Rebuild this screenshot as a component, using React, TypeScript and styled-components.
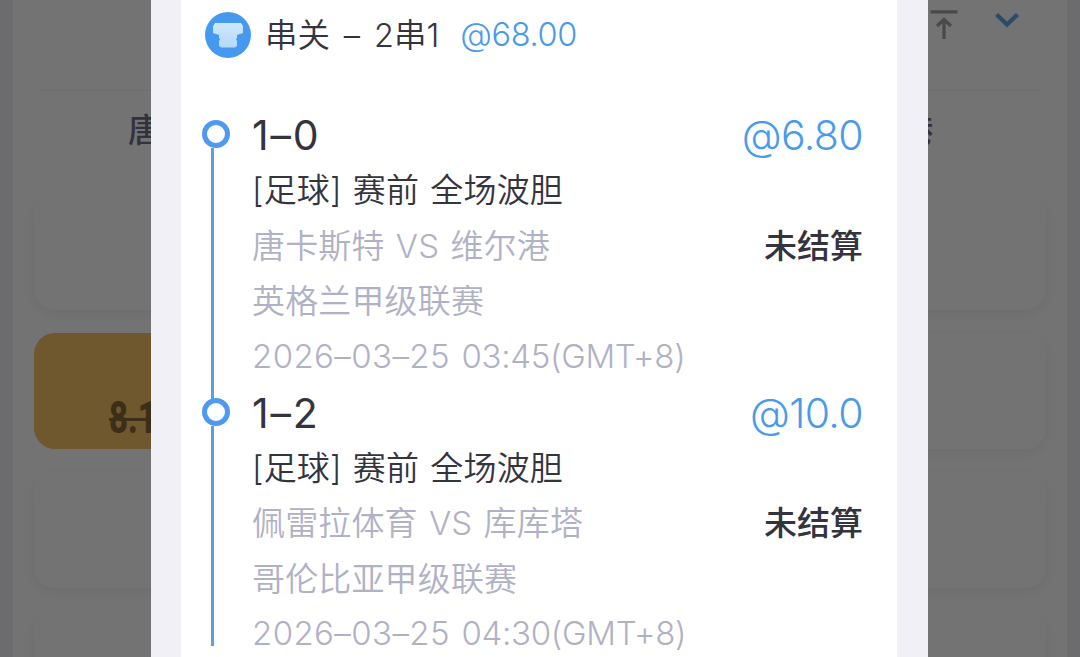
import React from "react";
import styled, { createGlobalStyle } from "styled-components";

const GlobalStyle = createGlobalStyle`
  * {
    box-sizing: border-box;
  }
  body {
    margin: 0;
    overflow: hidden;
    font-family: Inter, "Noto Sans CJK SC", sans-serif;
    font-feature-settings: "calt" 0;
  }
`;

const Screen = styled.div`
  position: relative;
  width: 1080px;
  height: 657px;
  overflow: hidden;
  padding: 0 13px;
  background: #f0f0f7;
`;
const Page = styled.div`
  height: 657px;
  overflow: hidden;
  padding: 0 21px;
  background: #ffffff;
`;
const Toolbar = styled.div`
  display: flex;
  justify-content: flex-end;
  height: 91px;
  margin: 0 6px;
  padding: 8px 21px 0 0;
  gap: 37px;
  border-bottom: 1px solid #f3f3f3;
`;
const Teams = styled.div`
  display: flex;
  justify-content: space-between;
  height: 103.4px;
  padding: 13px 113px 0 94px;
  font-size: 33px;
  line-height: 52px;
  font-weight: 500;
  color: #70708c;
`;
const OddsGrid = styled.div`
  display: grid;
  grid-template-columns: repeat(3, 1fr);
  grid-auto-rows: 116px;
  gap: 22.6px;
`;
const OddsCard = styled.div<{ $active?: boolean }>`
  display: flex;
  align-items: flex-end;
  padding: 0 75px 6px;
  border-radius: 21px;
  background: ${(props) => (props.$active ? "#f7c166" : "#ffffff")};
  box-shadow: ${(props) =>
    props.$active ? "none" : "0 4px 14px rgba(0, 0, 0, 0.06)"};
`;
const OldOdds = styled.span`
  font-family: Roboto, sans-serif;
  font-size: 44px;
  line-height: 50px;
  font-weight: 800;
  color: #856634;
  text-decoration: line-through;
  text-decoration-thickness: 3px;
  transform: scaleX(0.75);
  transform-origin: left;
`;

const Overlay = styled.div`
  position: absolute;
  inset: 0;
  display: flex;
  justify-content: center;
  background: rgba(0, 0, 0, 0.55);
`;
const Modal = styled.div`
  width: 777px;
  margin-right: 1px;
  padding: 0 31px 0 30px;
  background: #f0f0f6;
`;
const Ticket = styled.div`
  height: 100%;
  padding: 0 34px 0 21px;
  overflow: hidden;
  background: #ffffff;
`;
const TicketHeader = styled.div`
  display: flex;
  align-items: center;
  height: 70px;
  margin-bottom: 39px;
  padding-left: 3px;
  font-size: 32.5px;
  white-space: nowrap;
  color: #34343f;
`;
const TicketTitle = styled.span`
  margin: -6px 0 0 14px;
  font-weight: 350;
  word-spacing: 4.7px;
`;
const TicketOdds = styled.span`
  margin: -2px 0 0 21px;
  font-weight: 350;
  letter-spacing: -0.3px;
  color: #4a9aec;
`;

const Leg = styled.div`
  display: flex;
  height: 277.6px;
`;
const Track = styled.div<{ $last?: boolean }>`
  display: flex;
  flex-direction: column;
  flex: none;
  width: 28px;
  height: ${(props) => (props.$last ? "247.5px" : "277.6px")};
  padding-top: 11px;
`;
const Rail = styled.div`
  flex: 1;
  width: 3px;
  margin-left: 9px;
  margin-bottom: -12px;
  background: #5b9fdf;
`;
const Dot = styled.div`
  flex: none;
  width: 28px;
  height: 28px;
  border: 5px solid #4f9af0;
  border-radius: 50%;
  background: #ffffff;
`;
const LegBody = styled.div`
  flex: 1;
  padding-left: 22px;
  white-space: nowrap;
`;
const Line = styled.div<{ $muted?: boolean }>`
  display: flex;
  justify-content: space-between;
  height: 55.5px;
  line-height: 56px;
  font-size: 33px;
  font-weight: 350;
  letter-spacing: 0.15px;
  word-spacing: 1.8px;
  color: ${(props) => (props.$muted ? "#b1b1c6" : "#34343f")};
`;
const PickLine = styled(Line)`
  height: 53px;
  line-height: 53px;
  font-size: 41px;
  font-weight: 370;
  letter-spacing: 1.8px;
`;
const TimeLine = styled(Line)`
  justify-content: flex-start;
  line-height: 55px;
  letter-spacing: 0.4px;
`;
const Clock = styled.span`
  margin-left: 11.5px;
  letter-spacing: -0.3px;
`;
const Odds = styled.span`
  font-weight: 350;
  letter-spacing: -0.6px;
  color: #4a9aec;
`;
const Status = styled.span`
  font-weight: 500;
  letter-spacing: 0;
  color: #34343f;
`;

const legs = [
  {
    pick: "1–0",
    odds: "@6.80",
    market: "[足球] 赛前 全场波胆",
    match: "唐卡斯特 VS 维尔港",
    league: "英格兰甲级联赛",
    date: "2026–03–25",
    clock: "03:45(GMT+8)",
  },
  {
    pick: "1–2",
    odds: "@10.0",
    market: "[足球] 赛前 全场波胆",
    match: "佩雷拉体育 VS 库库塔",
    league: "哥伦比亚甲级联赛",
    date: "2026–03–25",
    clock: "04:30(GMT+8)",
  },
];

const ToTopIcon: React.FC = () => (
  <svg width="28" height="34" viewBox="0 0 28 34" fill="none">
    <path
      d="M0.5 3.8H27.5M14 31V12M7 18L14 11.5L21 18"
      stroke="#a0a0ac"
      strokeWidth="3.2"
    />
  </svg>
);

const ChevronIcon: React.FC = () => (
  <svg width="24" height="34" viewBox="0 0 24 34" fill="none">
    <path d="M1.5 6.5L12 16.5L22.5 6.5" stroke="#5ca8ee" strokeWidth="4.4" />
  </svg>
);

const ShirtIcon: React.FC = () => (
  <svg width="46" height="46" viewBox="0 0 46 46">
    <defs>
      <linearGradient id="shirt" x1="0" y1="0" x2="0" y2="1">
        <stop offset="0" stopColor="#d0e7fd" />
        <stop offset="1" stopColor="#b4d8fb" />
      </linearGradient>
    </defs>
    <circle cx="23" cy="23" r="23" fill="#459af0" />
    <path
      d="M10 11H36L38 14V21L32 23V26L31 27.5L32 29V34L30 35.5H16L14 34V29L15 27.5L14 26V23L8 21V14Z"
      fill="url(#shirt)"
    />
  </svg>
);

const App: React.FC = () => {
  return (
    <Screen>
      <GlobalStyle />
      <Page>
        <Toolbar>
          <ToTopIcon />
          <ChevronIcon />
        </Toolbar>
        <Teams>
          <span>唐卡斯特</span>
          <span>维尔港</span>
        </Teams>
        <OddsGrid>
          {Array.from({ length: 12 }, (_, i) => (
            <OddsCard key={i} $active={i === 3}>
              {i === 3 && <OldOdds>8.10</OldOdds>}
            </OddsCard>
          ))}
        </OddsGrid>
      </Page>
      <Overlay>
        <Modal>
          <Ticket>
            <TicketHeader>
              <ShirtIcon />
              <TicketTitle>串关 – 2串1</TicketTitle>
              <TicketOdds>@68.00</TicketOdds>
            </TicketHeader>
            {legs.map((leg, i) => (
              <Leg key={leg.clock}>
                <Track $last={i === legs.length - 1}>
                  <Dot />
                  <Rail />
                </Track>
                <LegBody>
                  <PickLine>
                    <span>{leg.pick}</span>
                    <Odds>{leg.odds}</Odds>
                  </PickLine>
                  <Line>{leg.market}</Line>
                  <Line $muted>
                    <span>{leg.match}</span>
                    <Status>未结算</Status>
                  </Line>
                  <Line $muted>{leg.league}</Line>
                  <TimeLine $muted>
                    <span>{leg.date}</span>
                    <Clock>{leg.clock}</Clock>
                  </TimeLine>
                </LegBody>
              </Leg>
            ))}
          </Ticket>
        </Modal>
      </Overlay>
    </Screen>
  );
};

export default App;
